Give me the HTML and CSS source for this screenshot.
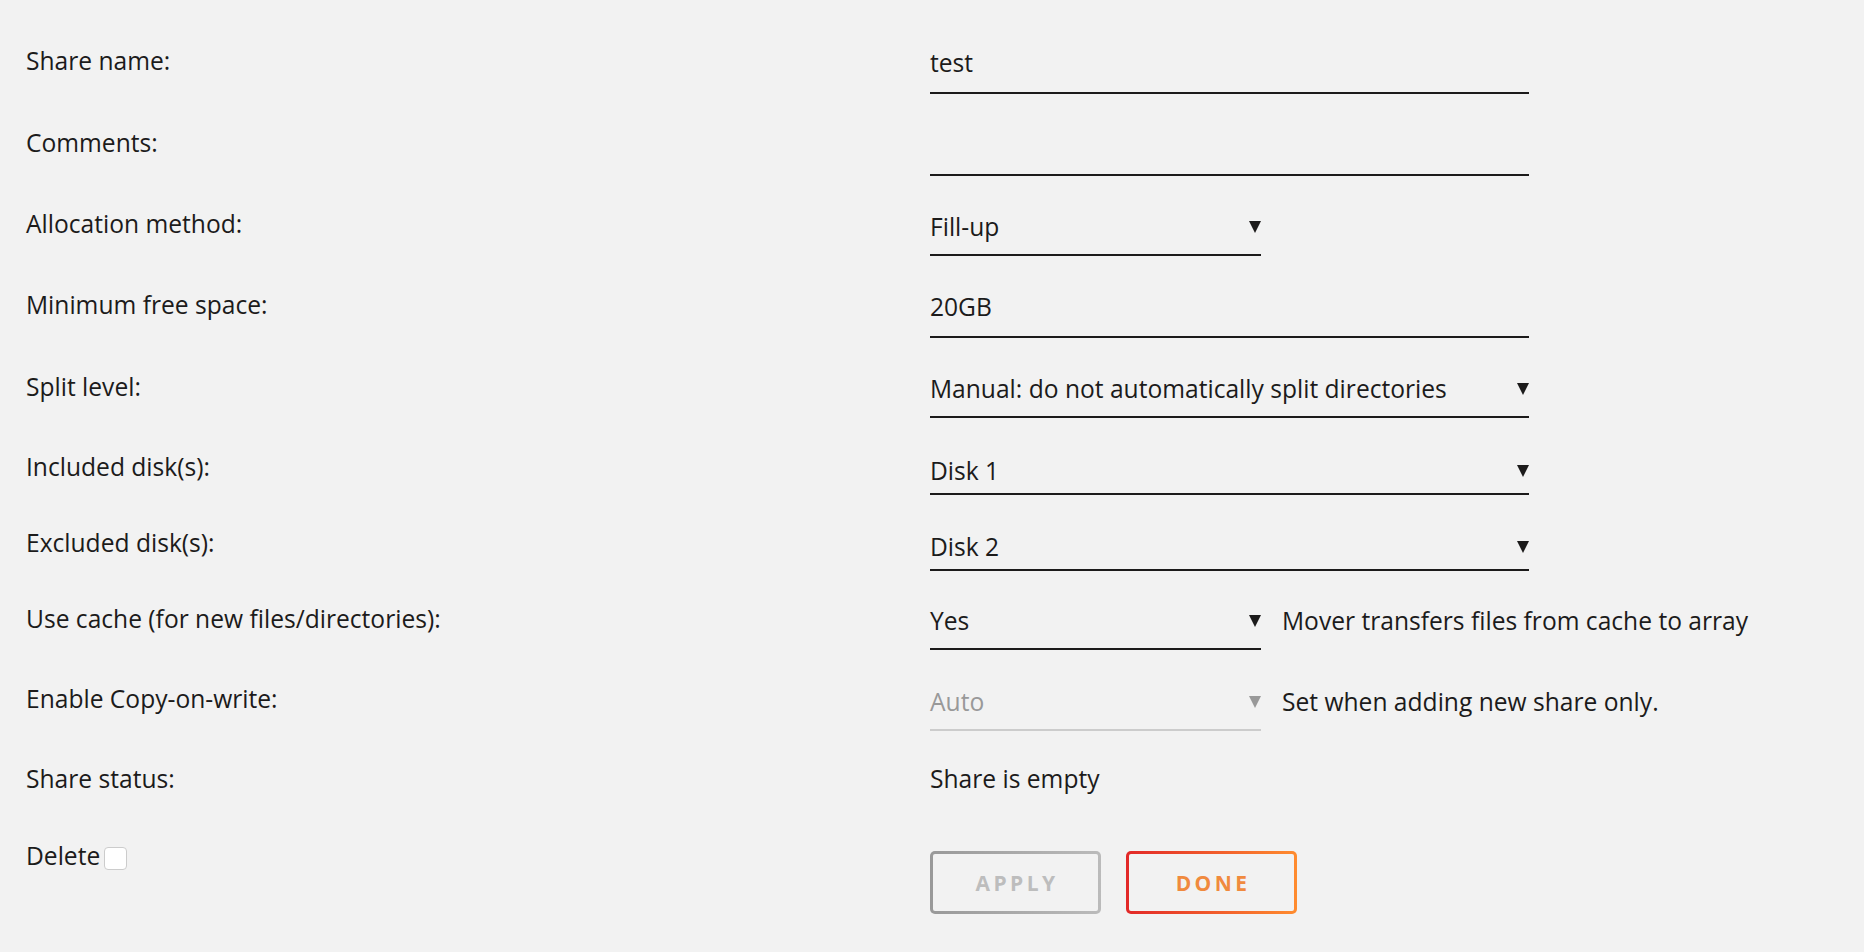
FILE: index.html
```html
<!DOCTYPE html>
<html lang="en">
<head>
<meta charset="utf-8">
<title>Share settings</title>
<link rel="stylesheet" href="styles.css">
</head>
<body>
<form class="form">
  <div class="row h82">
    <div class="label">Share name:</div>
    <div class="value m2"><div class="field wide text">test</div></div>
  </div>
  <div class="row h81">
    <div class="label">Comments:</div>
    <div class="value m2"><div class="field wide text"></div></div>
  </div>
  <div class="row h81">
    <div class="label">Allocation method:</div>
    <div class="value m3"><div class="field narrow select"><span>Fill-up</span><svg class="arrow" viewBox="0 0 12 12" width="12" height="12"><polygon points="0,0 12,0 6,12"/></svg></div></div>
  </div>
  <div class="row h82">
    <div class="label">Minimum free space:</div>
    <div class="value m2"><div class="field wide text">20GB</div></div>
  </div>
  <div class="row h80">
    <div class="label">Split level:</div>
    <div class="value m2"><div class="field wide select"><span>Manual: do not automatically split directories</span><svg class="arrow" viewBox="0 0 12 12" width="12" height="12"><polygon points="0,0 12,0 6,12"/></svg></div></div>
  </div>
  <div class="row h76">
    <div class="label">Included disk(s):</div>
    <div class="value m4"><div class="field wide multi"><span>Disk 1</span><svg class="arrow" viewBox="0 0 12 12" width="12" height="12"><polygon points="0,0 12,0 6,12"/></svg></div></div>
  </div>
  <div class="row h76">
    <div class="label">Excluded disk(s):</div>
    <div class="value m4"><div class="field wide multi"><span>Disk 2</span><svg class="arrow" viewBox="0 0 12 12" width="12" height="12"><polygon points="0,0 12,0 6,12"/></svg></div></div>
  </div>
  <div class="row h80">
    <div class="label">Use cache (for new files/directories):</div>
    <div class="value m2"><div class="field narrow select"><span>Yes</span><svg class="arrow" viewBox="0 0 12 12" width="12" height="12"><polygon points="0,0 12,0 6,12"/></svg></div><div class="hint">Mover transfers files from cache to array</div></div>
  </div>
  <div class="row h80">
    <div class="label">Enable Copy-on-write:</div>
    <div class="value m3"><div class="field narrow select disabled"><span>Auto</span><svg class="arrow" viewBox="0 0 12 12" width="12" height="12"><polygon points="0,0 12,0 6,12"/></svg></div><div class="hint">Set when adding new share only.</div></div>
  </div>
  <div class="row h77">
    <div class="label">Share status:</div>
    <div class="value"><div class="status">Share is empty</div></div>
  </div>
  <div class="row">
    <div class="label delete">Delete<span class="checkbox"></span></div>
    <div class="value buttons">
      <button type="button" class="btn apply">Apply</button>
      <button type="button" class="btn done">Done</button>
    </div>
  </div>
</form>
</body>
</html>
```

FILE: styles.css
```css
html, body {
  margin: 0;
  background: #f2f2f2;
}
body {
  font-family: "Open Sans", "Noto Sans", sans-serif;
  font-size: 24.6px;
  color: #1c1b1b;
}
.form {
  padding: 46px 0 0 26px;
  margin: 0;
}
.row {
  display: flex;
  align-items: flex-start;
}
.h82 { height: 82px; }
.h81 { height: 81px; }
.h80 { height: 80px; }
.h77 { height: 77px; }
.h76 { height: 76px; }
.label {
  flex: none;
  width: 904px;
  line-height: 30px;
  white-space: nowrap;
}
.value {
  display: flex;
  align-items: flex-start;
}
.m2 { margin-top: 2px; }
.m3 { margin-top: 3px; }
.m4 { margin-top: 4px; }
.field {
  box-sizing: border-box;
  line-height: 30px;
  border-bottom: 2px solid #1c1b1b;
  display: flex;
  align-items: flex-start;
  justify-content: space-between;
  white-space: nowrap;
}
.wide { width: 599px; }
.narrow { width: 331px; }
.text { height: 46px; }
.select { height: 44px; }
.multi { height: 39px; }
.arrow {
  flex: none;
  margin-top: 9px;
  fill: #1c1b1b;
}
.disabled {
  color: #999999;
  border-bottom-color: #cccccc;
}
.disabled .arrow { fill: #999999; }
.hint {
  margin-left: 21px;
  line-height: 30px;
  white-space: nowrap;
}
.status {
  line-height: 30px;
}
.delete {
  display: flex;
  align-items: flex-start;
}
.checkbox {
  box-sizing: border-box;
  width: 23px;
  height: 23px;
  margin: 6px 0 0 4px;
  background: #ffffff;
  border: 1px solid #cccccc;
  border-radius: 4px;
}
.buttons {
  margin-top: 10px;
  gap: 25px;
}
.btn {
  box-sizing: border-box;
  width: 171px;
  height: 63px;
  margin: 0;
  padding: 0 0 0 3px;
  border: 3px solid transparent;
  border-radius: 5px;
  font-family: "Open Sans", "Noto Sans", sans-serif;
  font-weight: 700;
  font-size: 21px;
  letter-spacing: 3.4px;
  text-transform: uppercase;
  display: flex;
  align-items: center;
  justify-content: center;
  cursor: pointer;
}
.apply {
  color: #bdbdbd;
  background: linear-gradient(#f2f2f2, #f2f2f2) padding-box,
              linear-gradient(90deg, #999999, #bbbbbb) border-box;
}
.done {
  color: #f08a3e;
  background: linear-gradient(#f2f2f2, #f2f2f2) padding-box,
              linear-gradient(90deg, #e22828, #ff8c2f) border-box;
}
```
